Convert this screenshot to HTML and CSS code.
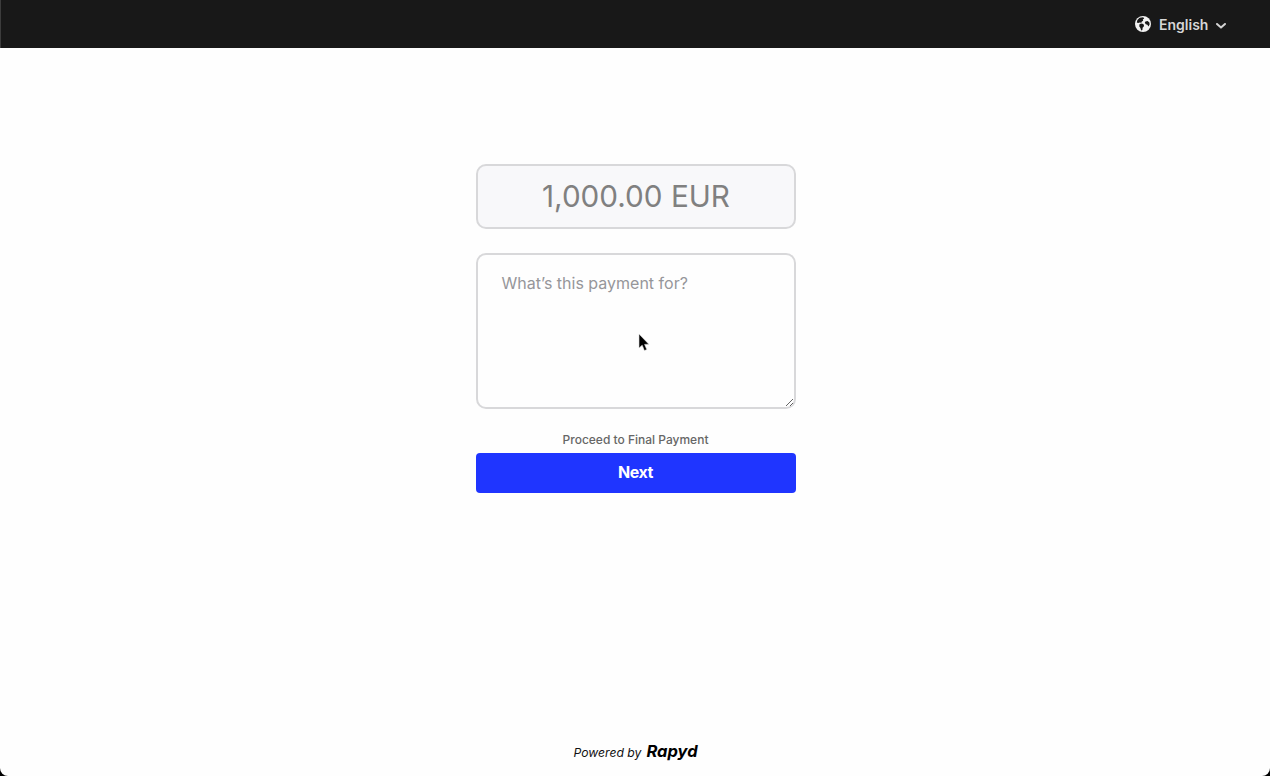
FILE: index.html
```html
<!DOCTYPE html>
<html lang="en">
<head>
    <meta charset="UTF-8">
    <meta name="viewport" content="width=device-width, initial-scale=1.0">
    <title>Rapyd Payment</title>
    <link rel="stylesheet" href="styles.css">
</head>
<body>
    <div class="page">
        <header class="topbar">
            <div class="lang">
                <svg class="globe" viewBox="0 0 16 16" width="16" height="16">
                    <circle cx="8" cy="8" r="8" fill="#f2f2f2"/>
                    <path fill="#181818" d="M4.6 1.8 8.2 1.2 9.2 2.4 7.8 3.4 8.2 4.8 6.8 5.4 6.4 6.8 4.8 6.4 3.2 7 1.8 6.4 2.4 4 Z"/>
                    <path fill="#181818" d="M4.6 8 7 7.6 9 8.8 8.8 10.6 7.6 11.8 7.4 14 6.2 14.4 5.4 12 4.2 10.2 Z"/>
                    <path fill="#181818" d="M10.4 5.4 12.6 5 14.4 6.4 14.6 8.6 13.4 10.4 12.4 8.8 10.8 8.2 9.8 6.8 Z"/>
                </svg>
                <span class="lang-name">English</span>
                <svg class="chevron" viewBox="0 0 10 6" width="10" height="6">
                    <path d="M1 1 5 4.6 9 1" fill="none" stroke="#d2d2d2" stroke-width="2" stroke-linecap="round" stroke-linejoin="round"/>
                </svg>
            </div>
        </header>

        <main class="content">
            <div class="payment-form">
                <div class="amount">1,000.00 EUR</div>
                <div class="note-wrap">
                    <textarea class="note" placeholder="What’s this payment for?"></textarea>
                    <svg class="pointer" viewBox="0 0 12 18" width="12" height="18">
                        <path d="M1 0 1 14 4.2 11.2 6.4 16.6 8.8 15.6 6.6 10.4 10.8 10.2 Z" fill="#000" stroke="#ddd" stroke-width=".6"/>
                    </svg>
                </div>
                <p class="proceed">Proceed to Final Payment</p>
                <button class="next-btn">Next</button>
            </div>
        </main>

        <footer class="footer">
            <span class="powered">Powered by</span>
            <span class="brand">Rapyd</span>
        </footer>
    </div>
</body>
</html>
```

FILE: styles.css
```css
html, body {
    margin: 0;
    height: 100%;
    background: #000;
}

body {
    font-family: "Inter", "Liberation Sans", sans-serif;
    overflow: hidden;
}

.page {
    height: 776px;
    background: #fefefe;
    border-radius: 0 0 8px 8px;
    display: flex;
    flex-direction: column;
    overflow: hidden;
}

.topbar {
    height: 48px;
    flex-shrink: 0;
    background: #181818;
    border-left: 1px solid #3c3c3c;
    display: flex;
    justify-content: flex-end;
    align-items: center;
    padding-right: 44px;
}

.lang {
    display: flex;
    align-items: center;
}

.globe {
    margin-right: 7px;
    margin-top: -1px;
}

.lang-name {
    width: 50px;
    color: #d6d6d6;
    font-size: 14px;
    font-weight: 600;
    letter-spacing: 0;
    padding-left: 1px;
    box-sizing: border-box;
    white-space: nowrap;
}

.chevron {
    margin-left: 8px;
    margin-top: 4px;
}

.content {
    flex: 1;
    display: flex;
    justify-content: center;
    padding-left: 2px;
    padding-top: 116px;
}

.payment-form {
    width: 320px;
}

.amount {
    box-sizing: border-box;
    height: 65px;
    border: 2px solid #d8d8da;
    border-radius: 10px;
    background: #f8f8fa;
    color: #808080;
    font-size: 29.7px;
    line-height: 61px;
    text-align: center;
}

.note-wrap {
    position: relative;
    margin-top: 24px;
    height: 156px;
}

.note {
    display: block;
    box-sizing: border-box;
    width: 100%;
    height: 156px;
    padding: 16px 24px 16px 23.5px;
    border: 2px solid #d8d8da;
    border-radius: 10px;
    background: #fefefe;
    font-family: inherit;
    font-size: 16px;
    line-height: 24px;
    outline: none;
}

.note::placeholder {
    color: #96969a;
    opacity: 1;
}

.pointer {
    position: absolute;
    left: 162px;
    top: 81px;
}

.proceed {
    margin: 24px 0 6px;
    color: #666;
    font-size: 12px;
    font-weight: 500;
    line-height: 14px;
    text-align: center;
    padding-right: 1px;
}

.next-btn {
    display: block;
    width: 100%;
    height: 40px;
    padding: 0 1px 2px 0;
    border: none;
    border-radius: 4px;
    background: #1f35ff;
    color: #fff;
    font-family: inherit;
    font-size: 16px;
    font-weight: 700;
    letter-spacing: -.03em;
}

.footer {
    box-sizing: border-box;
    height: 50px;
    flex-shrink: 0;
    padding-top: 15px;
    padding-left: 1px;
    display: flex;
    justify-content: center;
    align-items: baseline;
    gap: 5px;
    color: #111;
}

.powered {
    font-size: 12.2px;
    font-style: italic;
}

.brand {
    font-size: 16.5px;
    font-weight: 700;
    font-style: italic;
    color: #000;
}
```
